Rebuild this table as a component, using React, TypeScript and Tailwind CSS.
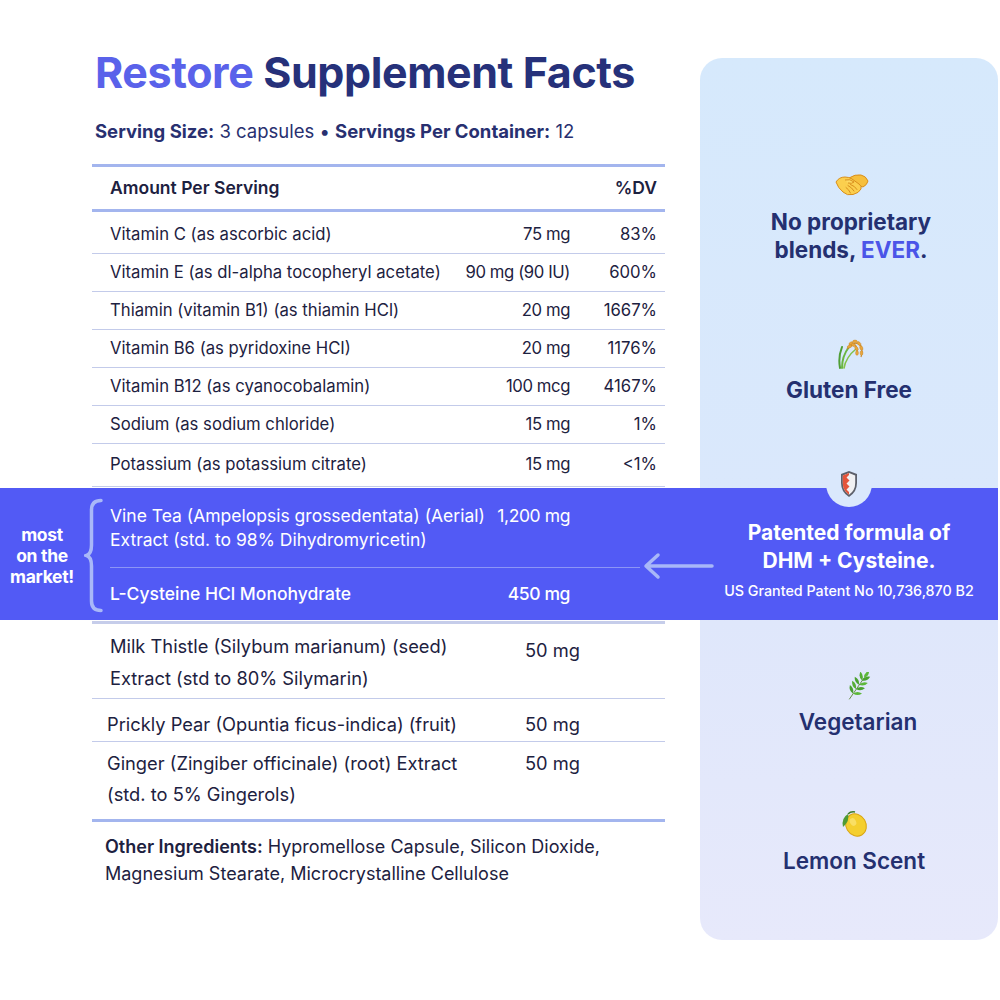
import React from "react";

const rows = [
  { n: "Vitamin C (as ascorbic acid)", a: "75 mg", d: "83%" },
  { n: "Vitamin E (as dl-alpha tocopheryl acetate)", a: "90 mg (90 IU)", d: "600%" },
  { n: "Thiamin (vitamin B1) (as thiamin HCl)", a: "20 mg", d: "1667%" },
  { n: "Vitamin B6 (as pyridoxine HCI)", a: "20 mg", d: "1176%" },
  { n: "Vitamin B12 (as cyanocobalamin)", a: "100 mcg", d: "4167%" },
  { n: "Sodium (as sodium chloride)", a: "15 mg", d: "1%" },
  { n: "Potassium (as potassium citrate)", a: "15 mg", d: "<1%" },
];

function Handshake() {
  return (
    <svg width="34" height="26" viewBox="0 0 34 26">
      <path d="M14 6 Q20 2 26 3 Q31 4 33 9 Q32 13 28 15 L20 12 Z" fill="#f6bf3c" stroke="#d98f1c" strokeWidth="1" strokeLinejoin="round" />
      <path d="M1 10 Q4 5 10 5 Q14 5 17 7 L24 12 Q27 14 26 17 Q24 21 18 22.5 Q12 24 8 20 Q3 16 1 10Z" fill="#fbcf4e" stroke="#d98f1c" strokeWidth="1" strokeLinejoin="round" />
      <path d="M10 8 Q15 6.5 19 10 Q17 12 13 11" fill="#fdd963" stroke="#d98f1c" strokeWidth="1" strokeLinejoin="round" />
      <path d="M13 13.5 Q17 15.5 19 19 M15.5 12.5 Q20 14 22 17.5 M11 15.5 Q14 17.5 15.5 21" fill="none" stroke="#d98f1c" strokeWidth="1" strokeLinecap="round" />
    </svg>
  );
}

function Rice() {
  return (
    <svg width="30" height="32" viewBox="0 0 30 32">
      <path d="M6 31 Q4 20 8 10" stroke="#4f9e35" strokeWidth="2" fill="none" strokeLinecap="round" />
      <path d="M8 31 Q8 19 15 10" stroke="#6ab642" strokeWidth="2" fill="none" strokeLinecap="round" />
      <path d="M10 31 Q12 20 22 12" stroke="#83c24a" strokeWidth="1.6" fill="none" strokeLinecap="round" />
      <path d="M15 10 Q22 3 27 9 Q29 14 27 20" stroke="#c98a2c" strokeWidth="1.2" fill="none" />
      <path d="M13 12 Q18 6 22 9 Q24 13 23 18" stroke="#c98a2c" strokeWidth="1.2" fill="none" />
      {[
        [17, 6.5, -30], [21, 4.5, 0], [25, 6.5, 40], [27.3, 11, 70], [27.5, 16, 90],
        [15.5, 9.5, -20], [19.5, 8, 20], [22.5, 11.5, 60], [23, 16, 90],
      ].map(([x, y, r], i) => (
        <ellipse key={i} cx={x} cy={y} rx="2.3" ry="1.4" fill="#eaa63a" stroke="#c7862a" strokeWidth="0.5" transform={`rotate(${r} ${x} ${y})`} />
      ))}
    </svg>
  );
}

function Leaf() {
  const leaves: [number, number, number, string][] = [
    [9, 21.5, -110, "#4aa12f"],
    [9, 21.5, 0, "#5db83a"],
    [12, 17, -115, "#56ad35"],
    [12, 17, -5, "#4aa12f"],
    [15, 12.8, -118, "#4aa12f"],
    [15, 12.8, -12, "#5db83a"],
    [18, 8.5, -100, "#56ad35"],
    [18, 8.5, -25, "#4aa12f"],
    [20, 6, -55, "#5db83a"],
  ];
  return (
    <svg width="28" height="28" viewBox="0 0 28 28">
      <path d="M5.5 27 L20 6" stroke="#6a8f4a" strokeWidth="1" strokeLinecap="round" />
      {leaves.map(([x, y, r, c], i) => (
        <path key={i} d="M0 0 Q4.5 -3.2 9 0 Q4.5 3.2 0 0Z" fill={c} transform={`translate(${x} ${y}) rotate(${r})`} />
      ))}
    </svg>
  );
}

function Lemon() {
  return (
    <svg width="30" height="30" viewBox="0 0 30 30">
      <ellipse cx="17" cy="17" rx="10" ry="11.5" transform="rotate(-30 17 17)" fill="#f4cf2f" stroke="#d9a514" strokeWidth="1" />
      <ellipse cx="14" cy="14" rx="3" ry="4" transform="rotate(-30 14 14)" fill="#fbe57a" opacity="0.7" />
      <path d="M4 19 Q2 10 9 6 Q11 13 4 19Z" fill="#4f9b34" />
      <path d="M9 6 Q12 3 16 4" stroke="#3d7d29" strokeWidth="1.5" fill="none" />
    </svg>
  );
}

function Shield() {
  return (
    <svg width="18" height="28" viewBox="0 0 18 28">
      <path d="M9 1 L17 4 L17 13 Q17 22 9 27 Q1 22 1 13 L1 4 Z" fill="#5d606b" />
      <path d="M9 3 L15.2 5.4 L15.2 13 Q15.2 20.5 9 24.8 Q2.8 20.5 2.8 13 L2.8 5.4 Z" fill="#f1f1f3" />
      <path d="M9 3 L2.8 5.4 L2.8 13 Q2.8 20.5 9 24.8 L9 22 L6.5 19.5 L9.5 16.5 L6.5 13.5 L9.5 10.5 L6.5 7.5 L9 5 Z" fill="#e4543b" />
    </svg>
  );
}

export default function App() {
  return (
    <div className="w-[1000px] h-[1000px] bg-white font-['Inter',sans-serif] text-[#1d2140] overflow-hidden">
      {/* TOP */}
      <section className="flex h-[488px]">
        <div className="w-[700px] pl-[92px] pr-[35px] pt-[46px]">
          <h1 className="text-[43px] leading-[52px] font-bold tracking-[-0.4px] pl-[3px] whitespace-nowrap">
            <span className="text-[#5a62ea]">Restore</span>{" "}
            <span className="text-[#26317a]">Supplement Facts</span>
          </h1>
          <p className="mt-[21px] pl-[3px] text-[18.5px] leading-[24px] text-[#283070] whitespace-nowrap">
            <span className="font-bold">Serving Size:</span> 3 capsules • <span className="font-bold">Servings Per Container:</span> 12
          </p>
          <div className="mt-[21px]">
            <div className="h-[3px] bg-[#a3b5ee]" />
            <div className="h-[42px] flex items-center pl-[18px] pr-[8px] font-semibold text-[17.5px]">
              <span className="flex-1">Amount Per Serving</span>
              <span>%DV</span>
            </div>
            <div className="h-[3px] bg-[#a3b5ee]" />
            {rows.map((r, i) => (
              <div
                key={r.n}
                className={`flex items-center pl-[18px] text-[16.7px] border-b-[1.5px] border-[#c3cbea] whitespace-nowrap ${i === 0 ? "h-[42px] pt-[4px]" : i === 6 ? "h-[43px]" : "h-[38px]"}`}
              >
                <span className="flex-1">{r.n}</span>
                <span className="text-right tracking-[-0.4px]">{r.a}</span>
                <span className="w-[95px] pr-[8px] text-right">{r.d}</span>
              </div>
            ))}
          </div>
        </div>
        <div className="w-[298px] mt-[58px] rounded-t-[22px] bg-gradient-to-b from-[#d6e9fc] to-[#dae8fc] flex flex-col items-center text-[#243070] font-bold text-[22.5px] leading-[28px]">
          <div className="mt-[114px] h-[26px] flex items-center pl-[6px]"><Handshake /></div>
          <div className="mt-[10px] text-center pl-[4px]">
            No proprietary<br />blends, <span className="text-[#4b55e8]">EVER</span>.
          </div>
          <div className="mt-[74px] h-[30px] flex items-center"><Rice /></div>
          <div className="mt-[8px]">Gluten Free</div>
        </div>
      </section>

      {/* BAND */}
      <section className="relative flex h-[132px] w-[998px] bg-[#525af5] text-white">
        <div className="w-[700px] flex items-center">
          <div className="w-[84px] text-center font-bold text-[17.5px] leading-[21px] tracking-[-0.3px] pt-[2px]">
            most<br />on the<br />market!
          </div>
          <svg width="20" height="115" viewBox="0 0 20 115" className="mt-[2px]">
            <path d="M17 2.5 Q7.5 2.5 7.5 12 L7.5 47 Q7.5 56 2.5 57.5 Q7.5 59 7.5 68 L7.5 103 Q7.5 112.5 17 112.5" fill="none" stroke="#a9b8f8" strokeWidth="3.5" strokeLinecap="round" />
          </svg>
          <div className="ml-[6px] w-[530px] pt-[2px] text-[17.5px]">
            <div className="flex w-[460px] leading-[24px] whitespace-nowrap">
              <span className="flex-1">Vine Tea (Ampelopsis grossedentata) (Aerial)<br />Extract (std. to 98% Dihydromyricetin)</span>
              <span className="w-[80px] text-right tracking-[-0.4px]">1,200 mg</span>
            </div>
            <div className="mt-[15px] h-px bg-[#8c95f6]" />
            <div className="mt-[14px] flex w-[460px] leading-[24px] font-medium">
              <span className="flex-1">L-Cysteine HCl Monohydrate</span>
              <span className="w-[80px] text-right tracking-[-0.4px]">450 mg</span>
            </div>
          </div>
        </div>
        <div className="w-[298px] flex flex-col items-center justify-center pt-[10px]">
          <div className="font-bold text-[21px] leading-[28px] text-center">
            Patented formula of<br />DHM + Cysteine.
          </div>
          <div className="mt-[8px] text-[14.3px] leading-[16px] font-medium whitespace-nowrap">US Granted Patent No 10,736,870 B2</div>
        </div>
        <svg width="74" height="30" viewBox="0 0 74 30" className="absolute left-[641px] top-[63px]">
          <path d="M71 15 L6 15 M17 4 L5 15 L17 26" fill="none" stroke="#a8b7f8" strokeWidth="3.5" strokeLinecap="round" strokeLinejoin="round" />
        </svg>
        <div className="absolute left-[826px] top-[-27px] w-[46px] h-[46px] rounded-full bg-[#dae8fc] flex items-center justify-center">
          <Shield />
        </div>
      </section>

      {/* BOTTOM */}
      <section className="flex">
        <div className="w-[700px] pl-[92px] pr-[35px]">
          <div className="h-[3px] bg-[#c6cdea] mt-[1px]" />
          <div className="flex pl-[18px] pt-[6px] pb-[4px] text-[18.3px] leading-[32px] border-b-[1.5px] border-[#c3cbea] whitespace-nowrap">
            <span className="w-[415px]">Milk Thistle (Silybum marianum) (seed)<br />Extract (std to 80% Silymarin)</span>
            <span className="pt-[4px]">50 mg</span>
          </div>
          <div className="flex pl-[15px] h-[43px] pt-[9px] text-[18.3px] leading-[32px] border-b-[1.5px] border-[#c3cbea] whitespace-nowrap">
            <span className="w-[418px]">Prickly Pear (Opuntia ficus-indica) (fruit)</span>
            <span>50 mg</span>
          </div>
          <div className="flex pl-[15px] pt-[6px] pb-[9px] text-[18.3px] leading-[31px] whitespace-nowrap">
            <span className="w-[418px]">Ginger (Zingiber officinale) (root) Extract<br />(std. to 5% Gingerols)</span>
            <span>50 mg</span>
          </div>
          <div className="h-[3px] bg-[#a3b5ee]" />
          <p className="pl-[13px] pt-[11px] text-[18px] leading-[27px] whitespace-nowrap">
            <span className="font-semibold">Other Ingredients:</span> Hypromellose Capsule, Silicon Dioxide,<br />Magnesium Stearate, Microcrystalline Cellulose
          </p>
        </div>
        <div className="w-[298px] h-[320px] rounded-b-[22px] bg-gradient-to-b from-[#dfe7fb] to-[#e7e9fb] flex flex-col items-center text-[#243070] font-semibold text-[22.5px] leading-[28px]">
          <div className="mt-[52px] h-[28px] flex items-center pl-[18px]"><Leaf /></div>
          <div className="mt-[8px] pl-[18px]">Vegetarian</div>
          <div className="mt-[72px] h-[30px] flex items-center pl-[10px]"><Lemon /></div>
          <div className="mt-[9px] pl-[10px]">Lemon Scent</div>
        </div>
      </section>
    </div>
  );
}
